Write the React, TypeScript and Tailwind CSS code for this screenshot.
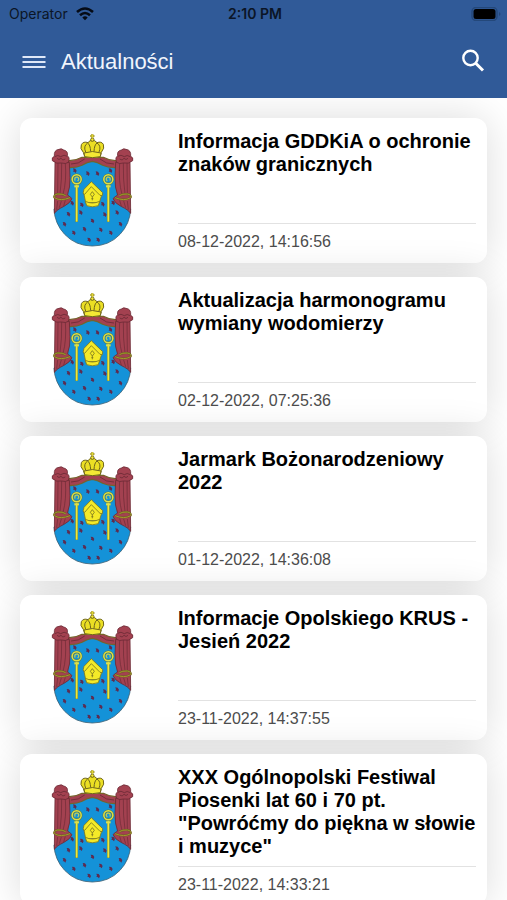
type NewsItem = {
  id: number;
  title: string;
  date: string;
};

const news: NewsItem[] = [
  { id: 1, title: "Informacja GDDKiA o ochronie znaków granicznych", date: "08-12-2022, 14:16:56" },
  { id: 2, title: "Aktualizacja harmonogramu wymiany wodomierzy", date: "02-12-2022, 07:25:36" },
  { id: 3, title: "Jarmark Bożonarodzeniowy 2022", date: "01-12-2022, 14:36:08" },
  { id: 4, title: "Informacje Opolskiego KRUS - Jesień 2022", date: "23-11-2022, 14:37:55" },
  {
    id: 5,
    title: 'XXX Ogólnopolski Festiwal Piosenki lat 60 i 70 pt. "Powróćmy do piękna w słowie i muzyce"',
    date: "23-11-2022, 14:33:21",
  },
];

const spots = [
  [104, 136], [143, 145], [172, 145], [211, 136], [96, 234], [125, 239],
  [188, 237], [219, 233], [85, 267], [122, 262], [157, 287], [194, 268],
  [231, 262], [73, 297], [101, 323], [133, 312], [182, 314], [212, 323],
  [241, 297], [147, 344], [174, 344],
];

function Curtain() {
  return (
    <g stroke="#6b2a35" strokeWidth="2.5" strokeLinejoin="round">
      <path
        fill="#a34150"
        d="M45 112 L43 265 Q47 262 51 256 Q62 249 72 244 Q91 234 96 221 Q91 215 82 210 Q91 188 90 158 L88 112 Z"
      />
      <path
        fill="none"
        strokeWidth="2"
        d="M54 114 L53 206 M65 114 Q66 165 60 206 M76 114 Q80 170 69 208 M53 228 L50 254 M64 228 L58 248 M76 226 L71 243"
      />
      <path
        fill="#a34150"
        d="M37 107 Q34 97 43 94 Q41 75 57 73 Q64 69 71 75 Q85 78 82 92 Q91 98 85 112 Q77 118 65 114 Q49 118 37 107 Z"
      />
      <path fill="none" strokeWidth="2.5" d="M44 95 Q54 88 62 95 Q72 87 82 94 M51 100 Q57 107 63 100 Q68 109 76 102" />
      <path fill="none" stroke="#6a5f22" strokeWidth="6" d="M43 219 Q40 209 53 207 Q68 206 77 212 M45 219 Q62 229 90 218" />
      <path fill="none" stroke="#a4982c" strokeWidth="3" d="M43 219 Q40 209 53 207 Q68 206 77 212 M45 219 Q62 229 90 218" />
    </g>
  );
}

function Crozier() {
  return (
    <g fill="none">
      <path stroke="#6c7c35" strokeWidth="8" d="M110 178 V291" />
      <path stroke="#ece83a" strokeWidth="5.5" d="M110 178 V290" />
      <circle cx="110" cy="163" r="13.5" stroke="#5d7a43" strokeWidth="8" />
      <circle cx="110" cy="163" r="13.5" stroke="#dde04a" strokeWidth="4.5" />
      <path stroke="#c9d050" strokeWidth="3.5" d="M105 167 Q102 156 112 156 Q120 161 113 168" />
      <path stroke="#dde04a" strokeWidth="6" d="M103 184 H117" />
    </g>
  );
}

function Crest() {
  return (
    <svg viewBox="0 0 330 390" className="w-[110px] shrink-0" role="img" aria-label="Herb gminy">
      <path
        fill="#1492d8"
        stroke="#3a6076"
        strokeWidth="2.5"
        d="M82 108 H232 V220 L272 252 Q270 296 240 328 Q207 363 157 363 Q107 363 74 328 Q44 296 42 252 L84 220 Z"
      />
      {spots.map(([x, y]) => (
        <path
          key={`${x}-${y}`}
          transform={`translate(${x} ${y})`}
          fill="#5d2c50"
          d="M-5 -6 L2 -5 L6 1 L3 8 L-1 4 L-5 4 L-3 0 Z"
        />
      ))}

      <path
        fill="#a34150"
        stroke="#76632a"
        strokeWidth="3.5"
        strokeLinejoin="round"
        d="M84 107 Q106 108 126 97 H190 Q210 108 230 107 L227 128 Q205 129 188 121 Q172 110 157 109 Q142 110 126 121 Q110 129 88 128 Z"
      />
      <path
        fill="none"
        stroke="#6b2a35"
        strokeWidth="2.5"
        d="M93 117 Q116 118 134 102 M222 117 Q198 118 180 102"
      />

      <Curtain />
      <g transform="translate(315 0) scale(-1 1)">
        <Curtain />
      </g>

      <Crozier />
      <g transform="translate(315 0) scale(-1 1)">
        <Crozier />
      </g>

      {/* mitre */}
      <g stroke="#7a7620" strokeWidth="2.5" strokeLinejoin="round">
        <path fill="#f4ea28" d="M155 178 L183 202 L184 214 L178 233 H137 L132 208 Z" />
        <path fill="#f4ea28" d="M154 170 L188 203 L187 212 L180 211 L154 185 L134 208 L129 205 L132 193 Z" />
        <path fill="#f4ea28" d="M136 229 Q157 239 179 229 L175 242 Q157 249 140 242 Z" />
        <path fill="none" d="M157 200 L151 208 L157 216 L163 208 Z M157 216 V226 M154 221 H160" />
      </g>

      {/* crown */}
      <g stroke="#70661c" strokeWidth="3" strokeLinejoin="round">
        <path
          fill="#ebdf24"
          d="M134 94 L130 82 Q119 71 124 59 Q130 48 144 53 Q150 44 157 47 Q164 44 171 53 Q184 48 190 58 Q195 69 184 82 L181 94 Q157 100 134 94 Z"
        />
        <path fill="none" d="M137 81 Q129 63 143 54 Q151 59 152 80 M177 81 Q185 63 171 54 Q163 59 162 80" />
        <path fill="#f4e934" d="M132 84 Q157 75 183 84 L181 95 Q157 101 134 95 Z" />
        <circle cx="157" cy="44" r="5" fill="#f4e934" />
        <path fill="none" stroke="#827928" strokeWidth="6" d="M157 40 V27 M151 33 H163" />
        <path fill="none" stroke="#e7dc39" strokeWidth="3" d="M157 40 V27 M151 33 H163" />
      </g>
    </svg>
  );
}

function StatusBar() {
  return (
    <div className="grid grid-cols-3 items-center pt-1 pr-1.5 pl-[9px] font-['Inter','Noto_Sans',sans-serif] text-sm leading-5 text-[#0b1526]">
      <div className="flex items-center gap-2">
        <span>Operator</span>
        <svg viewBox="0 0 18 14" className="w-[18px]" fill="none" stroke="#050b16" strokeWidth="2.6" aria-hidden="true">
          <path d="M1 5 Q9 -2 17 5" />
          <path d="M4 8.2 Q9 3.8 14 8.2" />
          <path d="M6.3 10.4 Q9 8 11.7 10.4 L9 13.2 Z" fill="#050b16" stroke="none" />
        </svg>
      </div>
      <span className="text-center font-semibold">2:10 PM</span>
      <svg viewBox="0 0 30 14" className="w-[30px] justify-self-end" aria-hidden="true">
        <rect x="1" y="0.5" width="25" height="13" rx="4" fill="none" stroke="#24487a" strokeWidth="1.5" />
        <rect x="2.5" y="2" width="22" height="10" rx="2.5" fill="#000" />
        <path d="M28 5 Q31 7 28 9 Z" fill="#24487a" />
      </svg>
    </div>
  );
}

function Header() {
  return (
    <header className="relative z-10 bg-[#305a98]">
      <StatusBar />
      <div className="flex h-[74px] items-center px-5 pt-0.5">
        <button type="button" aria-label="Menu" className="flex w-7 justify-center">
          <svg viewBox="0 0 24 14" className="w-6" stroke="#dfe8f8" strokeWidth="2.2" aria-hidden="true">
            <path d="M0.5 2 H23.5 M0.5 7 H23.5 M0.5 12 H23.5" />
          </svg>
        </button>
        <h1 className="ml-[13px] text-[22px] leading-7 text-[#f1f5fc]">Aktualności</h1>
        <button type="button" aria-label="Szukaj" className="ml-auto">
          <svg viewBox="0 0 28 28" className="w-7" fill="none" stroke="#fff" aria-hidden="true">
            <circle cx="11.5" cy="10" r="7.2" strokeWidth="2.4" />
            <path d="M16.5 15 L24 22.5" strokeWidth="3" />
          </svg>
        </button>
      </div>
    </header>
  );
}

function NewsCard({ item }: { item: NewsItem }) {
  return (
    <a
      href={`#news-${item.id}`}
      className="flex items-start gap-7 rounded-xl bg-white pl-5 pr-[11px] pt-[7px] pb-2 shadow-[0_0_40px_rgba(0,0,0,0.14)]"
    >
      <Crest />
      <div className="min-w-0 flex-1 pt-[5px]">
        <div className="min-h-[93px] pb-2">
          <h2 className="text-xl leading-[23px] font-bold text-black">{item.title}</h2>
        </div>
        <time className="block border-t border-[#e2e2e2] pt-1.5 text-base leading-6 text-[#4c4c4c]">
          {item.date}
        </time>
      </div>
    </a>
  );
}

export default function App() {
  return (
    <div className="min-h-screen bg-white font-['Liberation_Sans',Arial,sans-serif]">
      <Header />
      <main>
        <ul className="space-y-3.5 px-5 py-5">
          {news.map((item) => (
            <li key={item.id}>
              <NewsCard item={item} />
            </li>
          ))}
        </ul>
      </main>
    </div>
  );
}
